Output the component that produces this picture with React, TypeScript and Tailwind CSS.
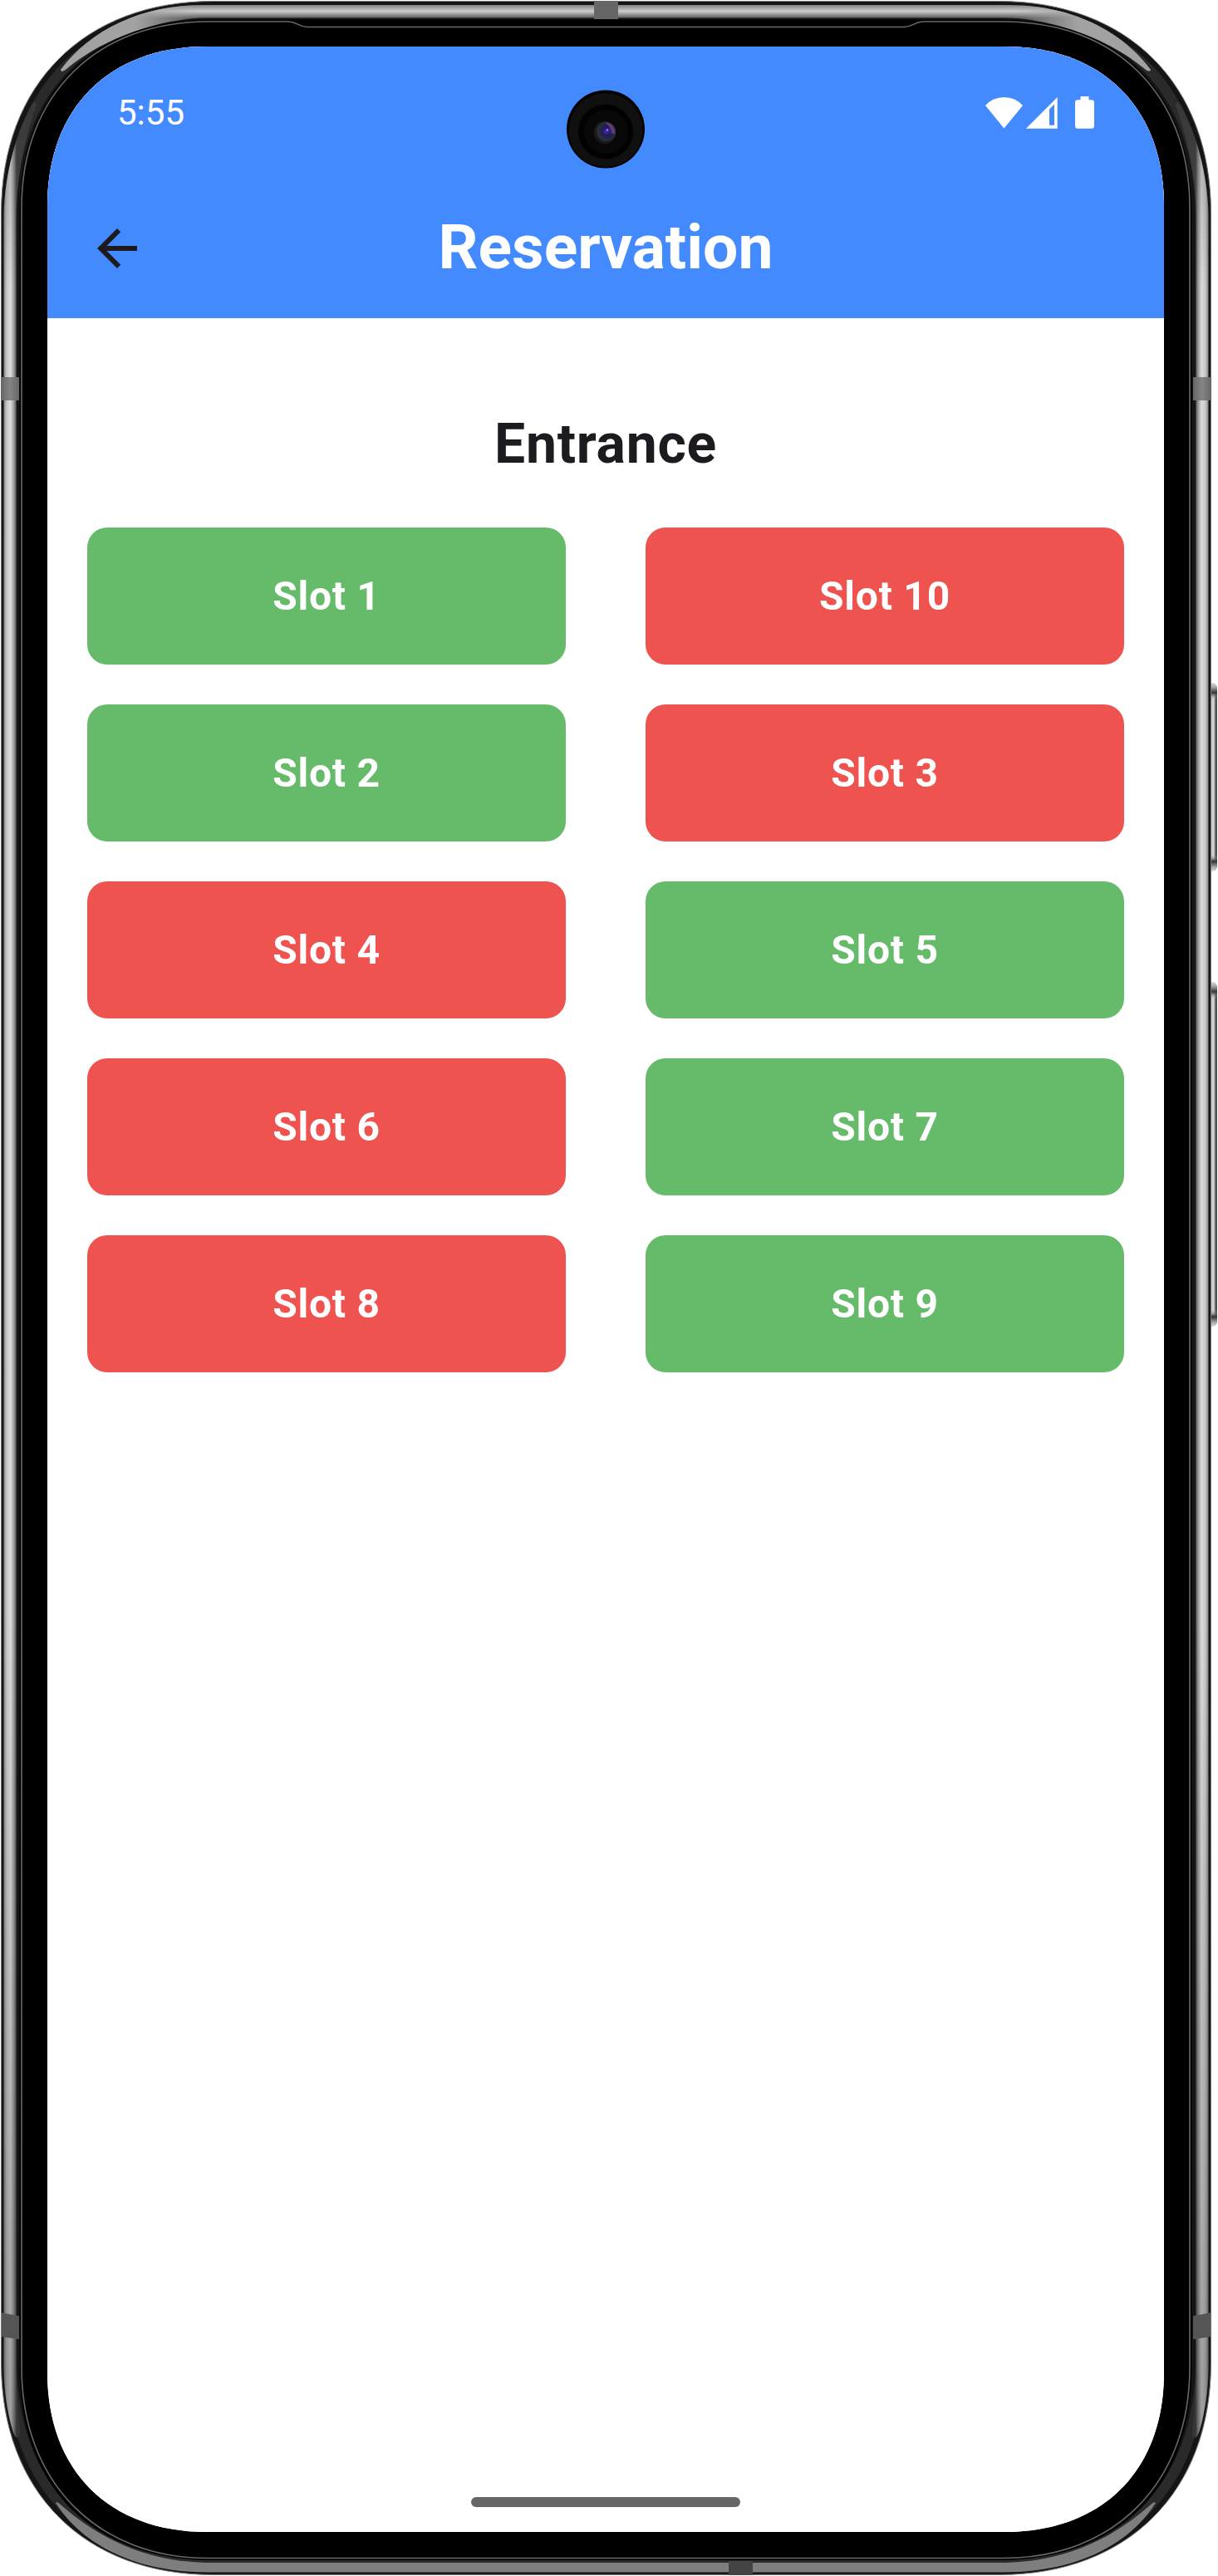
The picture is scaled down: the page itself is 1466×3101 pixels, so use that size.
const slots = [
  { id: 1, free: true },
  { id: 10, free: false },
  { id: 2, free: true },
  { id: 3, free: false },
  { id: 4, free: false },
  { id: 5, free: true },
  { id: 6, free: false },
  { id: 7, free: true },
  { id: 8, free: false },
  { id: 9, free: true },
];

/* Squircle-like outline: straight edges joined by long cubic corners. */
function outline(x1: number, y1: number, x2: number, y2: number, r: number, k: number) {
  return `M${x1 + r} ${y1}H${x2 - r}C${x2 - k} ${y1} ${x2} ${y1 + k} ${x2} ${y1 + r}V${y2 - r}C${x2} ${y2 - k} ${x2 - k} ${y2} ${x2 - r} ${y2}H${x1 + r}C${x1 + k} ${y2} ${x1} ${y2 - k} ${x1} ${y2 - r}V${y1 + r}C${x1} ${y1 + k} ${x1 + k} ${y1} ${x1 + r} ${y1}Z`;
}

/* Metallic highlights on the bezel. */
const sideShine =
  "M4.500 260C6 205 20 160 38 126C42 120 45 123 43 130C30 165 19.500 210 19.500 270V2850C19.500 2890 24 2915 24 2930C22 2938 18 2935 15 2925C9 2905 4.500 2875 4.500 2850Z";
const topShine =
  "M73 84C110 35 170 6 245 6H1213C1288 6 1348 35 1385 84C1384 87 1380 85 1378 83C1333 45 1263 21.500 1208 21.500H250C195 21.500 125 45 80 83C76 86 74 87 73 84Z";
const bottomShine =
  "M67 3013C100 3065 165 3096.500 250 3096.500H1208C1293 3096.500 1358 3065 1391 3013C1390 3011 1387 3013 1384 3016C1325 3068 1263 3085 1203 3085H255C195 3085 133 3068 74 3016C71 3013 68 3011 67 3013Z";

function PhoneFrame() {
  return (
    <svg className="absolute inset-0" width="1466" height="3101" viewBox="0 0 1466 3101" fill="none">
      <defs>
        <filter id="soft" x="0" y="0" width="1466" height="3101" filterUnits="userSpaceOnUse">
          <feGaussianBlur stdDeviation="0.7" />
        </filter>
        <linearGradient id="side" x1="4" x2="20" y1="0" y2="0" gradientUnits="userSpaceOnUse">
          <stop offset="0" stopColor="#777" />
          <stop offset="0.25" stopColor="#c6c6c6" />
          <stop offset="0.55" stopColor="#dcdcdc" />
          <stop offset="0.8" stopColor="#999" />
          <stop offset="1" stopColor="#4a4a4a" />
        </linearGradient>
        <linearGradient id="sideShade" x1="0" x2="0" y1="120" y2="2935" gradientUnits="userSpaceOnUse">
          <stop offset="0" stopColor="#000" stopOpacity="0.25" />
          <stop offset="0.08" stopColor="#000" stopOpacity="0" />
          <stop offset="0.65" stopColor="#000" stopOpacity="0" />
          <stop offset="1" stopColor="#000" stopOpacity="0.28" />
        </linearGradient>
        <linearGradient id="top" x1="0" x2="0" y1="5" y2="22" gradientUnits="userSpaceOnUse">
          <stop offset="0" stopColor="#777" />
          <stop offset="0.5" stopColor="#cdcdcd" />
          <stop offset="1" stopColor="#555" />
        </linearGradient>
        <linearGradient id="topCorner" x1="70" x2="1390" y1="0" y2="0" gradientUnits="userSpaceOnUse">
          <stop offset="0" stopColor="#a2a2a2" />
          <stop offset="0.07" stopColor="#a2a2a2" />
          <stop offset="0.13" stopColor="#a2a2a2" stopOpacity="0" />
          <stop offset="0.87" stopColor="#a2a2a2" stopOpacity="0" />
          <stop offset="0.93" stopColor="#a2a2a2" />
          <stop offset="1" stopColor="#a2a2a2" />
        </linearGradient>
        <linearGradient id="button" x1="1457" x2="1466" y1="0" y2="0" gradientUnits="userSpaceOnUse">
          <stop offset="0" stopColor="#bdbdbd" />
          <stop offset="0.4" stopColor="#d8d8d8" />
          <stop offset="0.6" stopColor="#888" />
          <stop offset="0.78" stopColor="#333" />
          <stop offset="1" stopColor="#b5b5b5" />
        </linearGradient>
        <linearGradient id="cap" x1="0" x2="0" y1="0" y2="1">
          <stop offset="0" stopColor="#ddd" />
          <stop offset="0.25" stopColor="#aaa" />
          <stop offset="0.6" stopColor="#333" />
          <stop offset="1" stopColor="#aaa" stopOpacity="0" />
        </linearGradient>
        <linearGradient id="band" x1="0" x2="1" y1="0" y2="0">
          <stop offset="0" stopColor="#666" />
          <stop offset="0.5" stopColor="#858585" />
          <stop offset="1" stopColor="#666" />
        </linearGradient>
        <radialGradient id="lens" cx="0.58" cy="0.46" r="0.55">
          <stop offset="0" stopColor="#3a249a" />
          <stop offset="0.45" stopColor="#231a50" />
          <stop offset="1" stopColor="#26343a" />
        </radialGradient>
      </defs>

      <path fill="url(#button)" d="M1457 822h3q5 2 5 8v211q0 6-5 8h-3zM1457 1182h3q5 2 5 8v399q0 6-5 8h-3z" />
      <path fill="url(#cap)" d="M1457 822h3q5 2 5 8v12h-8z" />
      <path fill="url(#cap)" d="M1457 1182h3q5 2 5 8v12h-8z" />
      <path fill="url(#cap)" transform="translate(0 1871) scale(1 -1)" d="M1457 822h3q5 2 5 8v12h-8z" />
      <path fill="url(#cap)" transform="translate(0 2779) scale(1 -1)" d="M1457 1182h3q5 2 5 8v12h-8z" />

      <path d={outline(1.5, 1.5, 1457.5, 3099.5, 255, 100)} fill="#151515" stroke="#777" strokeWidth="1" />
      <path d={outline(14, 14, 1445, 3087, 244, 94)} stroke="#2c2c2c" strokeWidth="12" filter="url(#soft)" />
      <g filter="url(#soft)">
        <path d={sideShine} fill="url(#side)" />
        <path d={sideShine} fill="url(#sideShade)" />
        <g transform="translate(1459 0) scale(-1 1)">
          <path d={sideShine} fill="url(#side)" />
          <path d={sideShine} fill="url(#sideShade)" />
        </g>
        <path d={topShine} fill="url(#top)" />
        <path d={topShine} fill="url(#topCorner)" />
        <path d={bottomShine} fill="#7e7e7e" />
      </g>
      <path d={outline(23.5, 23.5, 1434.5, 3082, 232, 88)} fill="#000" />
      <path
        d="M26 250C26 112 118 26 250 26H346C358 26 359 32.500 370 32.500H1088C1099 32.500 1100 26 1112 26H1208C1341 26 1432 112 1432 250V2850C1432 2989 1341 3079.500 1208 3079.500H250C118 3079.500 26 2989 26 2850Z"
        stroke="#686868"
        strokeWidth="1.600"
      />
      <path fill="#666" d="M715 1h29v22h-29z" />
      <path fill="#444" d="M877 3083h29v17h-29z" />
      <path fill="url(#band)" d="M1 454h22v28H1z" />
      <path fill="url(#band)" d="M1436 454h22v28h-22z" />
      <path fill="#555" d="M2 2784l21 4v28l-21-3zM1457 2784l-21 4v28l21-3z" />
      <path d={outline(57, 56, 1401, 3048, 192, 74)} fill="#fff" />
    </svg>
  );
}

function Camera() {
  return (
    <svg className="absolute left-[625px] top-[52px]" width="94" height="95" viewBox="0 0 94 95">
      <circle cx="47" cy="47.500" r="47" fill="#000" />
      <circle cx="47" cy="48.500" r="44.500" fill="#101010" />
      <circle cx="47" cy="50.500" r="33" fill="#020202" />
      <circle cx="47.500" cy="50.500" r="26.500" fill="#080808" />
      <circle cx="46" cy="51.500" r="13.500" fill="#191919" />
      <circle cx="47.500" cy="50.500" r="11.500" fill="url(#lens)" />
      <path d="M46 39.500a11.500 11.500 0 0 1 12 14l-4-1q0-8-8-13Z" fill="#6d4a7e" opacity="0.75" />
      <circle cx="47" cy="50.500" r="2.500" fill="#3c26a8" />
      <circle cx="49" cy="48.500" r="1.200" fill="#9186ff" />
    </svg>
  );
}

function StatusIcons() {
  return (
    <svg width="131" height="40" viewBox="0 0 131 40" fill="#fff">
      <path d="M22.500 38.500 0 11Q9 1 22.500 1T45 11Z" />
      <path fillRule="evenodd" d="M49 38.700 86.700 1V38.700ZM77 15.500V34.700H83V9.500Z" />
      <path d="M114.500 0h10v4.300h3.500q3 0 3 3V35.500q0 3.200-3 3.200h-17q-3 0-3-3.200V7.300q0-3 3-3h3.500Z" />
    </svg>
  );
}

export default function App() {
  return (
    <div className="relative h-[3101px] w-[1466px] overflow-hidden bg-white pl-[57px] pt-14 font-['Roboto',sans-serif]">
      <PhoneFrame />
      <div
        className="relative flex h-[2992px] w-[1344px] flex-col bg-white"
        style={{ clipPath: `path("${outline(0, 0, 1344, 2992, 192, 74)}")` }}
      >
        <header className="flex h-[327px] flex-col bg-[#448aff]">
          <div className="flex h-[159px] items-center justify-between px-[84px]">
            <time className="text-[42px] leading-none text-white">5:55</time>
            <StatusIcons />
          </div>
          <Camera />
          <div className="grid h-[168px] grid-cols-[168px_1fr_168px] items-center">
            <svg className="ml-12" width="72" height="72" viewBox="0 0 24 24" fill="#1d1b20" aria-label="Back">
              <path d="M20 11H7.830l5.590-5.590L12 4l-8 8 8 8 1.410-1.410L7.830 13H20v-2z" />
            </svg>
            <h1 className="pb-1 text-center text-[75px] font-bold leading-none text-white">Reservation</h1>
          </div>
        </header>
        <main className="flex flex-1 flex-col px-12">
          <h2 className="mt-[108px] text-center text-[66px] font-bold leading-[88px] tracking-[0.75px] text-[#1d1b20]">
            Entrance
          </h2>
          <div className="mt-14 grid grid-cols-2 gap-x-24 gap-y-12">
            {slots.map((slot) => (
              <button
                key={slot.id}
                className={`h-[165px] rounded-3xl text-[48px] font-bold tracking-[0.75px] text-white ${slot.free ? "bg-[#66bb6a]" : "bg-[#ef5350]"}`}
              >
                Slot {slot.id}
              </button>
            ))}
          </div>
        </main>
        <div className="mb-[30px] h-3 w-[324px] self-center rounded-full bg-[#666]" />
      </div>
    </div>
  );
}
